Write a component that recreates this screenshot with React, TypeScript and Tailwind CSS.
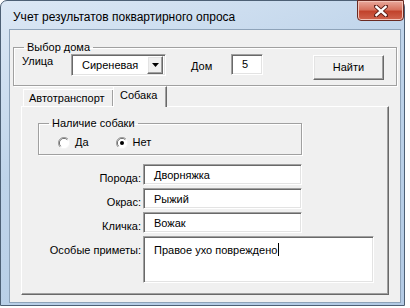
const sunken =
  'border border-t-[#a0a0a0] border-l-[#a0a0a0] border-r-white border-b-white shadow-[inset_1px_1px_0_#696969,inset_-1px_-1px_0_#e3e3e3]';
const raised =
  'border border-t-white border-l-white border-r-[#696969] border-b-[#696969] shadow-[inset_-1px_-1px_0_#a0a0a0,inset_1px_1px_0_#e3e3e3]';
const etched =
  'border border-[#a0a0a0] shadow-[inset_1px_1px_0_#fff,1px_1px_0_#fff]';

function CloseButton() {
  return (
    <div className="absolute right-0 top-[-1px] flex h-[21px] w-[47px] items-center justify-center rounded-b-[4px] border border-[#6a2a22] bg-[linear-gradient(#e9a99c,#d7735f_45%,#c2432c_55%,#d0654f)] shadow-[inset_0_0_0_1px_#f2c3b8]">
      <svg width="14" height="12" viewBox="0 0 14 12">
        <path d="M2 1.5 L12 10.5 M12 1.5 L2 10.5" stroke="#5a1d16" strokeWidth="4.2" strokeLinecap="round" />
        <path d="M2.4 1.9 L11.6 10.1 M11.6 1.9 L2.4 10.1" stroke="#fff" strokeWidth="2.4" strokeLinecap="square" />
      </svg>
    </div>
  );
}

function Radio({ checked, label, className }: { checked?: boolean; label: string; className?: string }) {
  return (
    <div className={`flex items-center gap-[5px] ${className ?? ''}`}>
      <svg width="12" height="12" viewBox="0 0 12 12">
        <circle cx="6" cy="6" r="5.5" fill="#fff" />
        <path d="M10 2 A5.5 5.5 0 0 0 2 10" stroke="#a0a0a0" strokeWidth="1" fill="none" />
        <path d="M9.3 2.7 A4.5 4.5 0 0 0 2.7 9.3" stroke="#696969" strokeWidth="1" fill="none" />
        <path d="M10 2 A5.5 5.5 0 0 1 2 10" stroke="#f4f4f4" strokeWidth="1" fill="none" />
        {checked && <circle cx="6" cy="6" r="2" fill="#000" />}
      </svg>
      <span>{label}</span>
    </div>
  );
}

function Field({ label, value, tall }: { label: string; value: string; tall?: boolean }) {
  return (
    <div className="flex items-start">
      <span className="mt-[8px] w-[121px] pr-[2px] text-right">{label}</span>
      <div
        className={`${sunken} bg-white pl-[10px] ${
          tall ? 'h-[47px] w-[231px] pt-[4px]' : 'h-[21px] w-[159px] pt-[4px]'
        }`}
      >
        {value}
        {tall && <span className="ml-[1px] inline-block h-[13px] w-px translate-y-[2px] bg-black" />}
      </div>
    </div>
  );
}

export default function App() {
  return (
    <div className="h-[308px] w-[410px] bg-white font-['Liberation_Sans',Tahoma,sans-serif] text-[11px] leading-[13px] text-black">
      <div className="relative flex h-[306px] w-[405px] flex-col rounded-t-[7px] border border-[#4d6075] bg-[linear-gradient(160deg,#dce8f5,#bfd4ea_40%,#b2cae4)]">
        <div className="h-[28px] pl-[12px] pt-[9px] text-[12px] leading-[14px]">
          Учет результатов поквартирного опроса
        </div>
        <CloseButton />

        <div className="mb-[2px] ml-[8px] mr-[3px] flex-1 border border-[#8ea3b9] bg-[#f0f0f0]">
          <fieldset className={`ml-[3px] mt-[11px] w-[384px] ${etched}`}>
            <legend className="ml-[10px] px-[3px]">Выбор дома</legend>
            <div className="flex h-[31px] items-start pl-[8px]">
              <span className="mt-[1px] w-[49px]">Улица</span>
              <div className={`${sunken} flex h-[22px] w-[95px] items-center bg-white pl-[10px] pr-[2px]`}>
                <span className="flex-1 pt-[1px]">Сиреневая</span>
                <div className={`${raised} flex h-[18px] w-[16px] items-center justify-center bg-[#f0f0f0]`}>
                  <svg width="7" height="4" viewBox="0 0 7 4">
                    <path d="M0 0 H7 L3.5 4 Z" fill="#000" />
                  </svg>
                </div>
              </div>
              <span className="ml-[25px] mt-[6px] w-[40px]">Дом</span>
              <div className={`${sunken} h-[21px] w-[32px] bg-white pl-[10px] pt-[3px]`}>5</div>
              <button
                className={`${raised} ml-[50px] mt-[1px] flex h-[25px] w-[71px] items-center justify-center bg-[#f0f0f0]`}
              >
                Найти
              </button>
            </div>
          </fieldset>

          <div className="ml-[11px] flex h-[20px] items-end">
            <div className="ml-[2px] flex h-[17px] w-[90px] items-center border-l border-t border-white pl-[5px] shadow-[inset_-1px_0_0_#a0a0a0]">
              Автотранспорт
            </div>
            <div className="relative z-10 -mb-[1px] flex h-[21px] w-[54px] items-start border-l border-r border-t border-l-white border-r-[#696969] border-t-white bg-[#f0f0f0] pl-[6px] pt-[2px] shadow-[inset_-1px_0_0_#a0a0a0]">
              Собака
            </div>
          </div>

          <div className="ml-[11px] h-[189px] w-[368px] border border-l-white border-t-white border-r-[#696969] border-b-[#696969] shadow-[inset_-1px_-1px_0_#a0a0a0]">
            <fieldset className={`ml-[16px] mt-[10px] w-[264px] ${etched}`}>
              <legend className="ml-[10px] px-[3px]">Наличие собаки</legend>
              <div className="flex h-[24px] items-start pl-[19px] pt-[6px]">
                <Radio label="Да" />
                <Radio label="Нет" checked className="ml-[27px]" />
              </div>
            </fieldset>

            <div className="mt-[9px] flex flex-col gap-[3px]">
              <Field label="Порода:" value="Дворняжка" />
              <Field label="Окрас:" value="Рыжий" />
              <Field label="Кличка:" value="Вожак" />
              <Field label="Особые приметы:" value="Правое ухо повреждено" tall />
            </div>
          </div>
        </div>
      </div>
    </div>
  );
}
